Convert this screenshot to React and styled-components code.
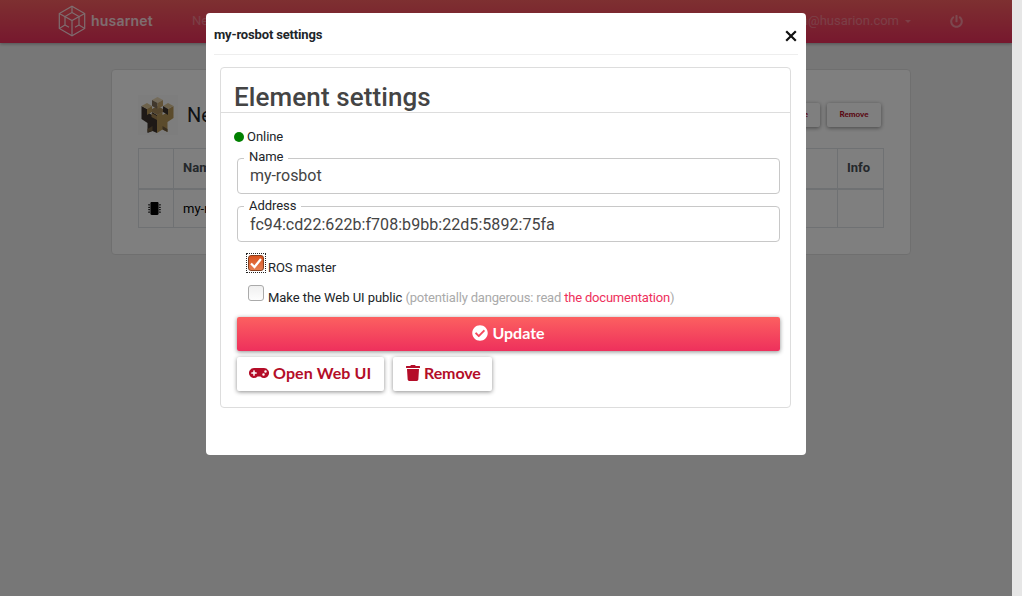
import React from "react";
import styled, { createGlobalStyle, css } from "styled-components";
import { FaCheckCircle, FaGamepad, FaTrash, FaMicrochip, FaPowerOff } from "react-icons/fa";

const GlobalStyle = createGlobalStyle`
  *, *::before, *::after { box-sizing: border-box; }
  html, body { margin: 0; height: 596px; overflow: hidden; }
  body {
    background: #e6e6e6;
    color: #212529;
    font-family: Roboto, "Liberation Sans", sans-serif;
    font-size: 13px;
    line-height: 20px;
  }
`;

const Page = styled.div`
  position: relative;
  width: 1012px;
  height: 596px;
  background: #eee;
  overflow: hidden;
`;

const Navbar = styled.header`
  display: flex;
  align-items: center;
  height: 43px;
  padding: 0 49px 1px 58px;
  background: linear-gradient(#fc6062, #ee305c);
  box-shadow: 0 1px 3px rgba(0, 0, 0, 0.3);
  color: rgba(255, 255, 255, 0.5);
`;

const Brand = styled.div`
  display: flex;
  align-items: center;
  gap: 5px;
  width: 134px;
  color: #fff;
  opacity: 0.8;
`;

const Wordmark = styled.span`
  font: 600 14px/20px Inter, sans-serif;
  letter-spacing: 0.2px;
`;

const NavLink = styled.span`
  opacity: 0.6;
`;

const Account = styled(NavLink)`
  display: flex;
  align-items: center;
  gap: 6px;
  margin-left: auto;
  margin-right: 39px;
`;

const Caret = styled.i`
  border: 3px solid transparent;
  border-top-color: currentColor;
  border-bottom: 0;
`;

const PowerButton = styled.span`
  display: flex;
  opacity: 0.8;
  font-size: 13px;
`;

const NetworkCard = styled.main`
  width: 800px;
  height: 186px;
  margin: 26px 0 0 111px;
  padding: 25px 26px;
  background: #fff;
  border: 1px solid #dfdfdf;
  border-radius: 4px;
`;

const NetworkHead = styled.div`
  display: flex;
  align-items: center;
  height: 40px;
  gap: 7px;
`;

const NetworkName = styled.h1`
  flex: 1;
  margin: 0;
  padding-left: 2px;
  font-size: 20px;
  font-weight: 400;
`;

const buttonShadow = "0 1px 4px rgba(0, 0, 0, 0.45)";

const SmallButton = styled.button`
  height: 24px;
  padding: 0 12px 2px;
  border: 0;
  border-radius: 2px;
  background: #fff;
  box-shadow: ${buttonShadow};
  color: #b40d28;
  font: 900 8px/20px Lato, sans-serif;
  letter-spacing: 0.05px;
  &:last-child { width: 54px; margin-right: 3px; }
`;

const Table = styled.table`
  width: 746px;
  margin-top: 13px;
  border-collapse: collapse;
  table-layout: fixed;
`;

const Cell = styled.td`
  height: 39px;
  width: ${(p) => p.$width || "auto"};
  padding: 1px 9px 0;
  border: 1px solid #dee2e6;
  text-align: left;
  font-weight: 400;
  color: #000;
  svg { display: block; font-size: 13px; }
`;

const HeadCell = styled(Cell)`
  height: 40px;
  padding: 0 9px;
  border-bottom: 2px solid #dee2e6;
  font-weight: 700;
  color: #495057;
`;

const Backdrop = styled.div`
  position: absolute;
  inset: 0;
  background: rgba(0, 0, 0, 0.5);
`;

const Modal = styled.section`
  width: 600px;
  height: 442px;
  margin: 13px 0 0 206px;
  padding: 0 8px;
  background: #fff;
  border-radius: 4px;
`;

const ModalHeader = styled.div`
  display: flex;
  align-items: center;
  justify-content: space-between;
  height: 42px;
  border-bottom: 1px solid #eee;
`;

const ModalTitle = styled.h2`
  margin: 0;
  padding-top: 3px;
  font-size: 13px;
  font-weight: 700;
  letter-spacing: -0.16px;
`;

const CloseIcon = styled.svg`
  display: block;
  width: 12px;
  height: 12px;
  margin: 4px 1px 0 0;
`;

const Panel = styled.div`
  width: 571px;
  height: 341px;
  margin: 12px 0 0 6px;
  border: 1px solid #ddd;
  border-radius: 4px;
`;

const PanelTitle = styled.h3`
  height: 45px;
  margin: 0;
  padding: 14px 13px 0;
  border-bottom: 1px solid #ddd;
  font-size: 26px;
  font-weight: 500;
  line-height: 30px;
  letter-spacing: 0.1px;
  color: #444;
`;

const PanelBody = styled.form`
  padding: 14px 10px 0 16px;
  color: #212529;
`;

const Status = styled.div`
  display: flex;
  align-items: center;
  gap: 3px;
  margin-left: -3px;
  letter-spacing: -0.05px;
  &::before {
    content: "";
    width: 10px;
    height: 10px;
    border-radius: 50%;
    background: #008000;
  }
`;

const Field = styled.div`
  position: relative;
  display: flex;
  align-items: center;
  height: 36px;
  margin-top: ${(p) => p.$gap}px;
  padding: ${(p) => p.$drop || 0}px 12px 0;
  border: 1px solid #c8c8c8;
  border-radius: 4px;
  color: #444;
  font-size: 16px;
  letter-spacing: ${(p) => p.$tracking || 0}px;
`;

const FieldLabel = styled.label`
  position: absolute;
  left: 6px;
  top: ${(p) => p.$top}px;
  padding: 0 5px;
  background: #fff;
  color: #212529;
  font-size: 13px;
  line-height: 20px;
  letter-spacing: -0.05px;
`;

const CheckRow = styled.label`
  display: flex;
  align-items: flex-start;
  height: 30px;
  padding-left: 9px;
  white-space: pre;
`;

const CheckText = styled.span`
  padding-top: 5px;
  letter-spacing: -0.05px;
`;

const CheckBox = styled.span`
  flex: none;
  display: flex;
  width: 20px;
  height: 20px;
  margin-right: 2px;
  border: 1px dotted ${(p) => (p.$on ? "#222" : "transparent")};
`;

const CheckFace = styled.span`
  width: 16px;
  height: 16px;
  margin: 1px;
  border-radius: 3px;
  border: 1px solid ${(p) => (p.$on ? "#85401f" : "#aaa")};
  background: ${(p) => (p.$on ? "linear-gradient(#d9531e, #e67e51)" : "linear-gradient(#f0f0f0, #fdfdfd)")};
  svg { display: block; }
`;

const Checks = styled.div`
  margin: 11px 0 4px;
`;

const Muted = styled.span`
  color: #aaa;
  letter-spacing: -0.19px;
`;

const Link = styled.a`
  color: #ee305c;
`;

const Button = styled.button`
  display: flex;
  align-items: center;
  justify-content: center;
  gap: ${(p) => p.$gap || 4}px;
  height: 34px;
  padding: 0 12px 2px;
  border: 0;
  border-radius: 2px;
  box-shadow: ${buttonShadow};
  font: 700 16px/20px Lato, sans-serif;
  letter-spacing: ${(p) => p.$tracking || 0}px;
  white-space: nowrap;
  svg { flex: none; }
  ${(p) =>
    p.$primary
      ? css`
          width: 100%;
          background: linear-gradient(#fc6060, #ee305c);
          color: #fff;
        `
      : css`
          width: ${p.$width}px;
          background: #fff;
          color: #b40d28;
          justify-content: flex-start;
        `}
`;

const ButtonRow = styled.div`
  display: flex;
  gap: 9px;
  margin-top: 6px;
`;

function HusarnetMark() {
  return (
    <svg width="28" height="32" viewBox="0 0 28 32" fill="none" stroke="currentColor" strokeWidth="1.2">
      <path d="M14 1.200 26.700 8.500V23.500L14 30.800 1.300 23.500V8.500Z" />
      <path d="M1.300 8.500 14 15.500 26.700 8.500M14 15.500V30.800" />
      <path d="M14 1.200V7.500L7 11.500V20L1.300 23.500M14 7.500 21 11.500V20L26.700 23.500M7 20 11 22.300M21 20 17 22.300" />
    </svg>
  );
}

function CubesPicture() {
  return (
    <svg width="40" height="40" viewBox="0 0 40 40">
      <rect width="40" height="40" fill="#fbfbfb" />
      <path d="M3.500 11 9 14V17L14 20V17L19 20V38L14.500 36 9.500 38V28L3.500 24Z" fill="#3c322c" />
      <path d="M19 20 24.500 17V20L30 17V14L35.500 11V23L29.500 27V37L24.500 34.500 19 38Z" fill="#b79658" />
      <path d="M9.500 37V34L14.500 31V36ZM24.500 31 29.500 34V37L24.500 34.500Z" fill="#6e5a3d" />
      <path d="M3.500 11 9 8 14 11 9 14ZM25 11 30 8 35.500 11 30 14Z" fill="#dbc597" />
      <path d="M9 14 14 11V17L9 20Z" fill="#b79658" />
      <path d="M25 11 30 14V20L25 17Z" fill="#3c322c" />
      <path d="M14 14 19.500 11 25 14V17L19.500 20 14 17Z" fill="#a88b5b" />
      <path d="M14 5 19.500 2 25 5 19.500 8Z" fill="#e9d7b4" />
      <path d="M14 5 19.500 8V14L14 11Z" fill="#83715b" />
      <path d="M19.500 8 25 5V11L19.500 14Z" fill="#c6a76e" />
      <path d="M13.500 18 19 21V25L13.500 22Z" fill="#a58552" />
    </svg>
  );
}

export default function App() {
  return (
    <>
      <GlobalStyle />
      <Page>
        <Navbar>
          <Brand>
            <HusarnetMark />
            <Wordmark>husarnet</Wordmark>
          </Brand>
          <NavLink>Ne</NavLink>
          <Account>
            a@husarion.com <Caret />
          </Account>
          <PowerButton>
            <FaPowerOff />
          </PowerButton>
        </Navbar>
        <NetworkCard>
          <NetworkHead>
            <CubesPicture />
            <NetworkName>Ne</NetworkName>
            <SmallButton>e</SmallButton>
            <SmallButton>Remove</SmallButton>
          </NetworkHead>
          <Table>
            <thead>
              <tr>
                <HeadCell as="th" $width="35px" />
                <HeadCell as="th">Name</HeadCell>
                <HeadCell as="th" $width="46px">Info</HeadCell>
              </tr>
            </thead>
            <tbody>
              <tr>
                <Cell>
                  <FaMicrochip />
                </Cell>
                <Cell>my-rosbot</Cell>
                <Cell />
              </tr>
            </tbody>
          </Table>
        </NetworkCard>
        <Backdrop>
          <Modal>
            <ModalHeader>
              <ModalTitle>my-rosbot settings</ModalTitle>
              <CloseIcon viewBox="0 0 12 12">
                <path d="M1.200 1.200 10.800 10.800M10.800 1.200 1.200 10.800" stroke="#111" strokeWidth="2.200" />
              </CloseIcon>
            </ModalHeader>
            <Panel>
              <PanelTitle>Element settings</PanelTitle>
              <PanelBody>
                <Status>Online</Status>
                <Field $gap={11} $tracking={-0.05}>
                  <FieldLabel $top={-12}>Name</FieldLabel>
                  my-rosbot
                </Field>
                <Field $gap={12} $drop={2} $tracking={0.05}>
                  <FieldLabel $top={-11}>Address</FieldLabel>
                  fc94:cd22:622b:f708:b9bb:22d5:5892:75fa
                </Field>
                <Checks>
                  <CheckRow>
                    <CheckBox $on>
                      <CheckFace $on>
                        <svg width="14" height="14" viewBox="0 0 14 14">
                          <path d="M2 7.500 5.500 11 12 3" fill="none" stroke="#fff" strokeWidth="2.200" />
                        </svg>
                      </CheckFace>
                    </CheckBox>
                    <CheckText>ROS master</CheckText>
                  </CheckRow>
                  <CheckRow>
                    <CheckBox>
                      <CheckFace />
                    </CheckBox>
                    <CheckText>
                      Make the Web UI public <Muted>(potentially dangerous: read <Link>the documentation</Link>)</Muted>
                    </CheckText>
                  </CheckRow>
                </Checks>
                <Button type="button" $primary>
                  <FaCheckCircle /> Update
                </Button>
                <ButtonRow>
                  <Button type="button" $width={147} $tracking={0.1}>
                    <FaGamepad size={20} /> Open Web UI
                  </Button>
                  <Button type="button" $width={99} $gap={3} $tracking={-0.1}>
                    <FaTrash size={16} /> Remove
                  </Button>
                </ButtonRow>
              </PanelBody>
            </Panel>
          </Modal>
        </Backdrop>
      </Page>
    </>
  );
}
